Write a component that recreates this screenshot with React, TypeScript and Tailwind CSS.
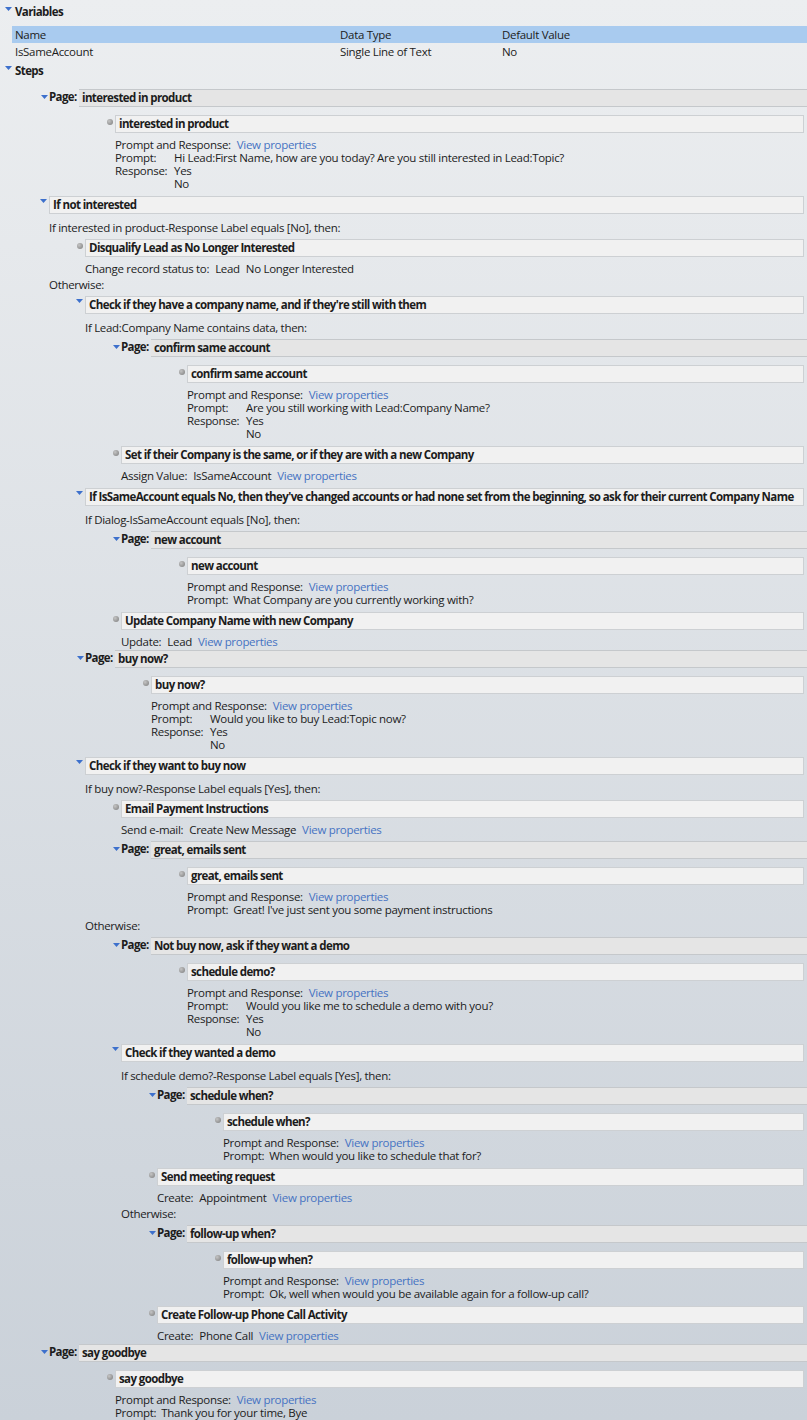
import React from "react";

type Detail =
  | { kind: "prompt"; prompt: string; responses?: string[] }
  | { kind: "line"; label: string; parts: string[]; link?: boolean };

type Node =
  | { kind: "page"; title: string; children: Node[] }
  | { kind: "step"; title: string; detail: Detail }
  | { kind: "cond"; title: string; ifText: string; then: Node[]; otherwise?: Node[] };

const steps: Node[] = [
  {
    kind: "page",
    title: "interested in product",
    children: [
      {
        kind: "step",
        title: "interested in product",
        detail: {
          kind: "prompt",
          prompt: "Hi Lead:First Name, how are you today? Are you still interested in Lead:Topic?",
          responses: ["Yes", "No"],
        },
      },
    ],
  },
  {
    kind: "cond",
    title: "If not interested",
    ifText: "If interested in product-Response Label equals [No], then:",
    then: [
      {
        kind: "step",
        title: "Disqualify Lead as No Longer Interested",
        detail: { kind: "line", label: "Change record status to:", parts: ["Lead", "No Longer Interested"] },
      },
    ],
    otherwise: [
      {
        kind: "cond",
        title: "Check if they have a company name, and if they're still with them",
        ifText: "If Lead:Company Name contains data, then:",
        then: [
          {
            kind: "page",
            title: "confirm same account",
            children: [
              {
                kind: "step",
                title: "confirm same account",
                detail: {
                  kind: "prompt",
                  prompt: "Are you still working with Lead:Company Name?",
                  responses: ["Yes", "No"],
                },
              },
            ],
          },
          {
            kind: "step",
            title: "Set if their Company is the same, or if they are with a new Company",
            detail: { kind: "line", label: "Assign Value:", parts: ["IsSameAccount"], link: true },
          },
        ],
      },
      {
        kind: "cond",
        title:
          "If IsSameAccount equals No, then they've changed accounts or had none set from the beginning, so ask for their current Company Name",
        ifText: "If Dialog-IsSameAccount equals [No], then:",
        then: [
          {
            kind: "page",
            title: "new account",
            children: [
              {
                kind: "step",
                title: "new account",
                detail: { kind: "prompt", prompt: "What Company are you currently working with?" },
              },
            ],
          },
          {
            kind: "step",
            title: "Update Company Name with new Company",
            detail: { kind: "line", label: "Update:", parts: ["Lead"], link: true },
          },
        ],
      },
      {
        kind: "page",
        title: "buy now?",
        children: [
          {
            kind: "step",
            title: "buy now?",
            detail: { kind: "prompt", prompt: "Would you like to buy Lead:Topic now?", responses: ["Yes", "No"] },
          },
        ],
      },
      {
        kind: "cond",
        title: "Check if they want to buy now",
        ifText: "If buy now?-Response Label equals [Yes], then:",
        then: [
          {
            kind: "step",
            title: "Email Payment Instructions",
            detail: { kind: "line", label: "Send e-mail:", parts: ["Create New Message"], link: true },
          },
          {
            kind: "page",
            title: "great, emails sent",
            children: [
              {
                kind: "step",
                title: "great, emails sent",
                detail: { kind: "prompt", prompt: "Great! I've just sent you some payment instructions" },
              },
            ],
          },
        ],
        otherwise: [
          {
            kind: "page",
            title: "Not buy now, ask if they want a demo",
            children: [
              {
                kind: "step",
                title: "schedule demo?",
                detail: {
                  kind: "prompt",
                  prompt: "Would you like me to schedule a demo with you?",
                  responses: ["Yes", "No"],
                },
              },
            ],
          },
          {
            kind: "cond",
            title: "Check if they wanted a demo",
            ifText: "If schedule demo?-Response Label equals [Yes], then:",
            then: [
              {
                kind: "page",
                title: "schedule when?",
                children: [
                  {
                    kind: "step",
                    title: "schedule when?",
                    detail: { kind: "prompt", prompt: "When would you like to schedule that for?" },
                  },
                ],
              },
              {
                kind: "step",
                title: "Send meeting request",
                detail: { kind: "line", label: "Create:", parts: ["Appointment"], link: true },
              },
            ],
            otherwise: [
              {
                kind: "page",
                title: "follow-up when?",
                children: [
                  {
                    kind: "step",
                    title: "follow-up when?",
                    detail: {
                      kind: "prompt",
                      prompt: "Ok, well when would you be available again for a follow-up call?",
                    },
                  },
                ],
              },
              {
                kind: "step",
                title: "Create Follow-up Phone Call Activity",
                detail: { kind: "line", label: "Create:", parts: ["Phone Call"], link: true },
              },
            ],
          },
        ],
      },
    ],
  },
  {
    kind: "page",
    title: "say goodbye",
    children: [
      {
        kind: "step",
        title: "say goodbye",
        detail: { kind: "prompt", prompt: "Thank you for your time, Bye" },
      },
    ],
  },
];

function Tri() {
  return (
    <svg width="7" height="4" viewBox="0 0 7 4" className="block">
      <polygon points="0,0 7,0 3.5,4" fill="#3d70cc" />
    </svg>
  );
}

function Bullet() {
  return <div className="h-[6px] w-[6px] rounded-full bg-[radial-gradient(circle_at_35%_35%,#c4c4c4,#7c7c7c)]" />;
}

function Link() {
  return <span className="text-[#4673c2]">View properties</span>;
}

function DetailBlock({ detail }: { detail: Detail }) {
  if (detail.kind === "line") {
    return (
      <div className="mt-[5px] leading-[13px] whitespace-nowrap">
        {detail.label}
        {detail.parts.map((p) => (
          <span key={p} className="ml-[6px]">
            {p}
          </span>
        ))}
        {detail.link && (
          <span className="ml-[6px]">
            <Link />
          </span>
        )}
      </div>
    );
  }
  return (
    <div className="mt-[5px] leading-[13px] whitespace-nowrap">
      <div>
        Prompt and Response:
        <span className="ml-[6px]">
          <Link />
        </span>
      </div>
      {detail.responses ? (
        <div className="grid grid-cols-[59px_1fr]">
          <div>Prompt:</div>
          <div>{detail.prompt}</div>
          <div>Response:</div>
          <div>
            {detail.responses.map((r) => (
              <div key={r}>{r}</div>
            ))}
          </div>
        </div>
      ) : (
        <div>
          Prompt:<span className="ml-[5px]">{detail.prompt}</span>
        </div>
      )}
    </div>
  );
}

function List({ nodes }: { nodes: Node[] }) {
  return (
    <>
      {nodes.map((n, i) => (
        <Item key={i} node={n} prev={i > 0 ? nodes[i - 1].kind : undefined} />
      ))}
    </>
  );
}

function Item({ node, prev }: { node: Node; prev?: Node["kind"] }) {
  if (node.kind === "page") {
    return (
      <div className={prev === "cond" ? "mt-[2px]" : "mt-[5px]"}>
        <div className="-ml-[8px] flex h-[18px]">
          <div className="w-[8px] pt-[6px]">
            <Tri />
          </div>
          <div className="w-[30px] font-bold leading-[15px] tracking-[-0.6px]">Page:</div>
          <div className="flex flex-1 items-center border-y border-[#c5c8cb] bg-[#e5e5e5] pl-[3px] font-bold tracking-[-0.6px] whitespace-nowrap">
            {node.title}
          </div>
        </div>
        <div className="pl-[66px] pt-[3px]">
          <List nodes={node.children} />
        </div>
      </div>
    );
  }
  if (node.kind === "step") {
    return (
      <div className={prev ? "mt-[6px]" : "mt-[5px]"}>
        <div className="-ml-[8px] mr-[3px] flex h-[18px]">
          <div className="w-[8px] pt-[4px]">
            <Bullet />
          </div>
          <div className="flex flex-1 items-center border border-[#cdd0d3] bg-[#f1f1f1] pl-[3px] font-bold tracking-[-0.6px] whitespace-nowrap">
            {node.title}
          </div>
        </div>
        <DetailBlock detail={node.detail} />
      </div>
    );
  }
  return (
    <div className={prev ? "mt-[6px]" : "mt-[5px]"}>
      <div className="-ml-[9px] mr-[3px] flex h-[18px]">
        <div className="w-[9px] pt-[3px]">
          <Tri />
        </div>
        <div className="flex flex-1 items-center overflow-hidden border border-[#cdd0d3] bg-[#f1f1f1] pl-[3px] font-bold tracking-[-0.6px] whitespace-nowrap">
          {node.title}
        </div>
      </div>
      <div className="mt-[7px] h-[13px] leading-[13px] whitespace-nowrap">{node.ifText}</div>
      <div className="pl-[36px]">
        <List nodes={node.then} />
      </div>
      {node.otherwise && (
        <>
          <div className="mt-[3px] h-[13px] leading-[13px]">Otherwise:</div>
          <div className="pl-[36px]">
            <List nodes={node.otherwise} />
          </div>
        </>
      )}
    </div>
  );
}

export default function App() {
  return (
    <div className="h-[1420px] w-full overflow-hidden bg-gradient-to-b from-[#eceef0] to-[#cad1d9] pt-[1px] font-['Segoe_UI','Open_Sans',sans-serif] text-[11.5px] tracking-[-0.3px] text-[#1c1c1c]">
      <div className="flex h-[22px] items-center">
        <div className="w-[15px] self-start pl-[5px] pt-[6px]">
          <Tri />
        </div>
        <span className="font-bold tracking-[-0.6px]">Variables</span>
      </div>
      <div className="ml-[12px] mt-[3px]">
        <div className="grid h-[17px] grid-cols-[325px_162px_1fr] items-center bg-[#a9cbef] pl-[3px]">
          <div>Name</div>
          <div>Data Type</div>
          <div>Default Value</div>
        </div>
        <div className="grid h-[18px] grid-cols-[325px_162px_1fr] items-center pl-[3px]">
          <div>IsSameAccount</div>
          <div>Single Line of Text</div>
          <div>No</div>
        </div>
      </div>
      <div className="flex h-[20px] items-center">
        <div className="w-[15px] self-start pl-[5px] pt-[5px]">
          <Tri />
        </div>
        <span className="font-bold tracking-[-0.6px]">Steps</span>
      </div>
      <div className="pl-[49px] pt-[3px]">
        <List nodes={steps} />
      </div>
    </div>
  );
}
